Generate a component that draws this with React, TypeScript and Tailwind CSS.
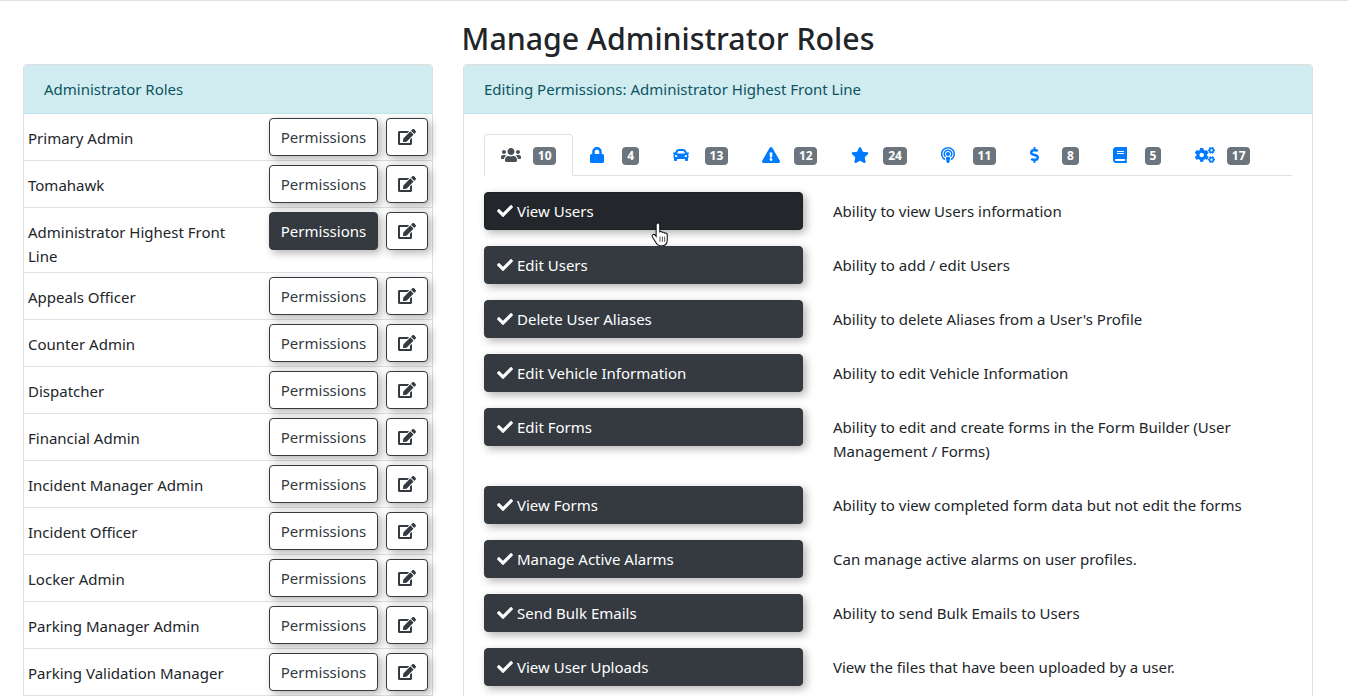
import { FaBook, FaCar, FaCheck, FaCogs, FaDollarSign, FaEdit, FaExclamationTriangle, FaLock, FaPodcast, FaStar, FaUsers } from 'react-icons/fa'

const roles = [
	'Primary Admin',
	'Tomahawk',
	'Administrator Highest Front Line',
	'Appeals Officer',
	'Counter Admin',
	'Dispatcher',
	'Financial Admin',
	'Incident Manager Admin',
	'Incident Officer',
	'Locker Admin',
	'Parking Manager Admin',
	'Parking Validation Manager',
]

const tabs = [
	{ icon: FaUsers, size: 'h-4 w-5', count: 10 },
	{ icon: FaLock, size: 'h-4 w-[14px]', count: 4 },
	{ icon: FaCar, size: 'h-4 w-4', count: 13 },
	{ icon: FaExclamationTriangle, size: 'h-4 w-[18px]', count: 12 },
	{ icon: FaStar, size: 'h-4 w-[18px]', count: 24 },
	{ icon: FaPodcast, size: 'h-4 w-[14px]', count: 11 },
	{ icon: FaDollarSign, size: 'h-4 w-[9px]', count: 8 },
	{ icon: FaBook, size: 'h-4 w-[14px]', count: 5 },
	{ icon: FaCogs, size: 'h-4 w-5', count: 17 },
]

const permissions = [
	{ title: 'View Users', text: 'Ability to view Users information' },
	{ title: 'Edit Users', text: 'Ability to add / edit Users' },
	{ title: 'Delete User Aliases', text: "Ability to delete Aliases from a User's Profile" },
	{ title: 'Edit Vehicle Information', text: 'Ability to edit Vehicle Information' },
	{ title: 'Edit Forms', text: 'Ability to edit and create forms in the Form Builder (User Management / Forms)' },
	{ title: 'View Forms', text: 'Ability to view completed form data but not edit the forms' },
	{ title: 'Manage Active Alarms', text: 'Can manage active alarms on user profiles.' },
	{ title: 'Send Bulk Emails', text: 'Ability to send Bulk Emails to Users' },
	{ title: 'View User Uploads', text: 'View the files that have been uploaded by a user.' },
]

function HandCursor() {
	return (
		<svg className="absolute left-[167px] top-[30px]" width="19" height="25" viewBox="0 0 18 24">
			<path
				d="M6.500 1C7.600 1 8.300 1.800 8.300 2.800V9.500C9.300 8.900 10.300 9.200 10.700 10 11.600 9.500 12.600 9.800 13 10.700 14.200 10.200 15.500 11 15.500 12.300V17C15.500 20.500 13.500 23 10 23 7.300 23 5.800 22 4.700 20L1.300 14.500C.7 13.400 1 12.500 1.800 12.100 2.600 11.700 3.500 12 4.100 12.800L4.800 13.800V2.800C4.800 1.800 5.400 1 6.500 1Z"
				fill="#fff"
				stroke="#111"
				strokeWidth="1"
			/>
			<path d="M8.500 14v5M10.800 14v5M13 14v5" stroke="#333" strokeWidth=".8" />
		</svg>
	)
}

export default function App() {
	return (
		<div className="h-[696px] overflow-hidden border-t border-[#dee2e6] bg-white font-['Noto_Sans',sans-serif] text-[15px] leading-6 text-[#212529]">
			<div className="ml-[23px] w-[1290px]">
				<h1 className="mt-[14px] mb-px text-center text-[30.3px] leading-[48px] font-medium">Manage Administrator Roles</h1>
				<div className="flex h-[700px] items-start gap-[30px]">
					{/* Roles list */}
					<section className="h-[800px] w-[410px] shrink-0 rounded border border-[#dfdfdf]">
						<div className="h-[49px] rounded-t border-b border-[#bee5eb] bg-[#d1ecf1] px-5 py-3 text-[#0c5460]">Administrator Roles</div>
						{roles.map(role => {
							const isActive = role === 'Administrator Highest Front Line'
							return (
								<div key={role} className="flex items-start border-b border-[#dee2e6] p-1">
									<div className="w-[241px] shrink-0 pt-2 pr-[35px] leading-6">{role}</div>
									<button
										className={`h-[38px] w-[109px] shrink-0 rounded border border-[#343a40] shadow-[3px_3px_8px_rgba(0,0,0,0.3)] ${isActive ? 'bg-[#343a40] text-white' : 'bg-white text-[#343a40]'}`}
									>
										Permissions
									</button>
									<button className="ml-2 flex h-[38px] w-[42px] shrink-0 items-center justify-center rounded border border-[#343a40] bg-white text-[#343a40] shadow-[3px_3px_8px_rgba(0,0,0,0.3)]">
										<FaEdit className="h-4 w-[18px]" />
									</button>
								</div>
							)
						})}
					</section>

					{/* Permission editor */}
					<section className="h-[800px] w-[850px] shrink-0 rounded border border-[#dfdfdf]">
						<div className="h-[49px] rounded-t border-b border-[#bee5eb] bg-[#d1ecf1] px-5 py-3 text-[#0c5460]">
							Editing Permissions: Administrator Highest Front Line
						</div>
						<div className="p-5">
							<div className="mb-4 flex border-b border-[#dee2e6]">
								{tabs.map((tab, i) => {
									const Icon = tab.icon
									return (
										<div
											key={i}
											className={`-mb-px flex h-[42px] items-center rounded-t border px-4 ${i === 0 ? 'border-[#dee2e6] border-b-white bg-white text-[#495057]' : 'border-transparent text-[#007bff]'}`}
										>
											<span className="w-8 shrink-0">
												<Icon className={tab.size} />
											</span>
											<span className="mt-0.5 rounded bg-[#6c757d] px-[4.8px] text-xs leading-[18px] font-bold text-white">{tab.count}</span>
										</div>
									)
								})}
							</div>
							<div className="flex flex-col gap-4">
								{permissions.map((permission, i) => (
									<div key={permission.title} className="flex items-start">
										<div className="relative w-[319px] shrink-0">
											<button
												className={`flex h-[38px] w-full items-center gap-[4px] rounded border px-3 text-white shadow-[3px_3px_8px_rgba(0,0,0,0.3)] ${i === 0 ? 'border-[#1d2124] bg-[#23272b]' : 'border-[#343a40] bg-[#343a40]'}`}
											>
												<FaCheck className="text-base" />
												{permission.title}
											</button>
											{i === 0 && <HandCursor />}
										</div>
										<div className="ml-[30px] w-[459px] py-[7px]">{permission.text}</div>
									</div>
								))}
							</div>
						</div>
					</section>
				</div>
			</div>
		</div>
	)
}
